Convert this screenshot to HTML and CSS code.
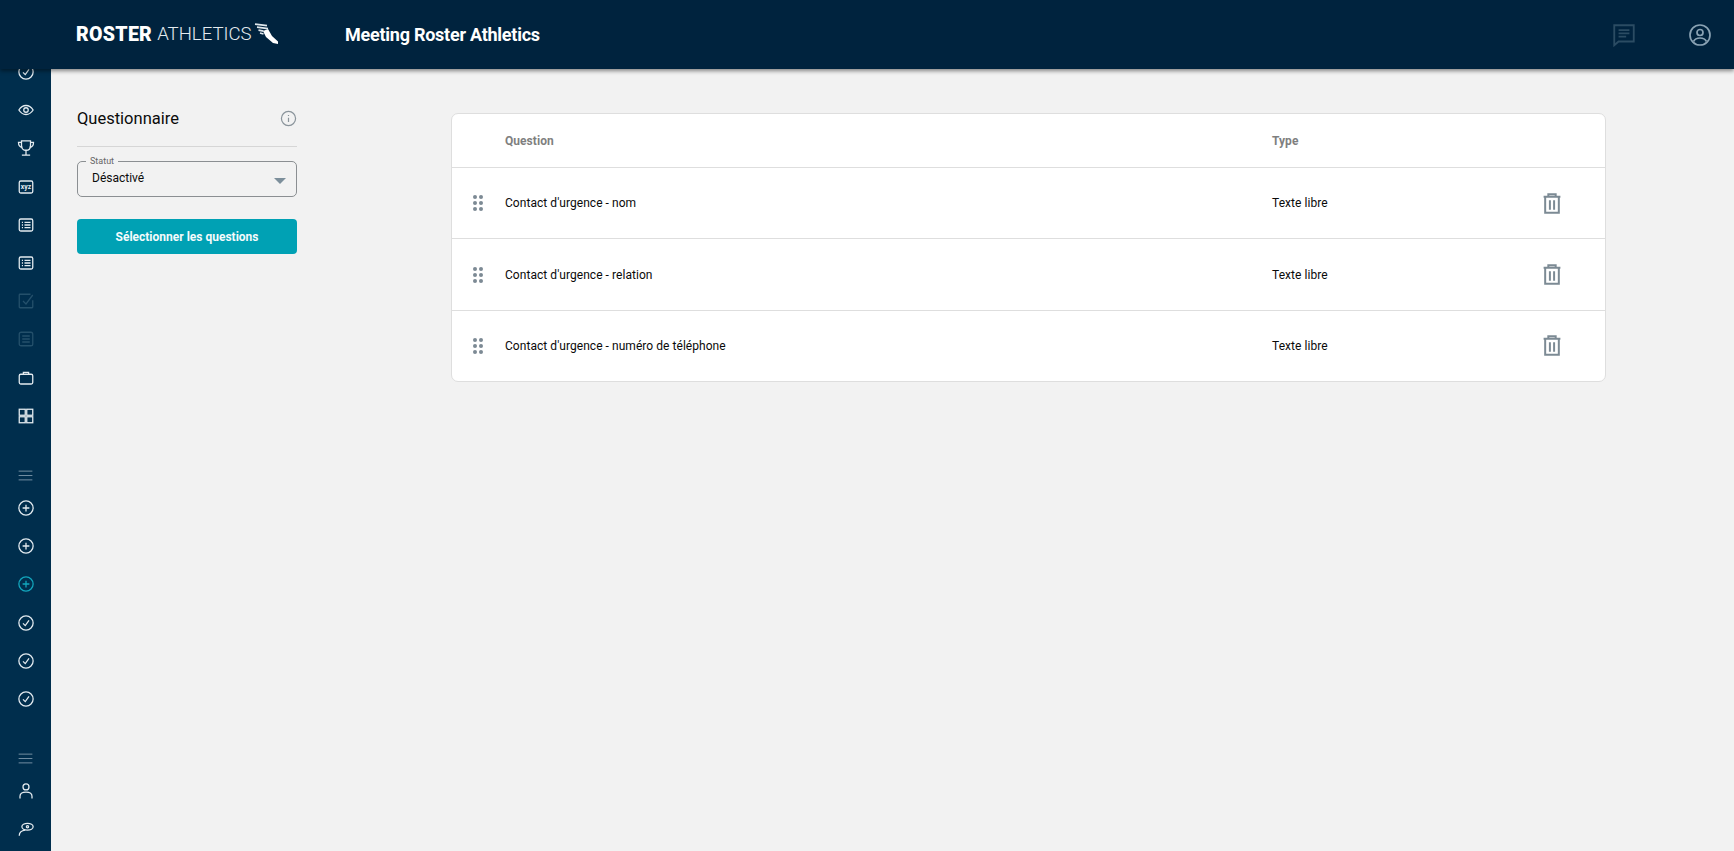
FILE: index.html
```html
<!DOCTYPE html>
<html lang="fr">
<head>
<meta charset="utf-8">
<title>Meeting Roster Athletics</title>
<link rel="stylesheet" href="styles.css">
</head>
<body>
<svg class="defs" width="0" height="0">
  <symbol id="i-check" viewBox="0 0 24 24"><circle cx="12" cy="12" r="9.5"/><path d="M8 12.5l3 3 5-7"/></symbol>
  <symbol id="i-plus" viewBox="0 0 24 24"><circle cx="12" cy="12" r="9.5"/><path d="M12 7.5v9M7.5 12h9"/></symbol>
  <symbol id="i-list" viewBox="0 0 24 24"><rect x="3" y="4" width="18" height="16" rx="2"/><path d="M6.5 8.5h1.5M6.5 12h1.5M6.5 15.5h1.5M10 8.500h8M10 12h8M10 15.500h8"/></symbol>
  <symbol id="i-menu" viewBox="0 0 24 24"><path d="M1 5h22M1 12h22M1 19h22"/></symbol>
</svg>

<header class="topbar">
  <div class="logo">
    <span class="logo-strong">ROSTER</span><span class="logo-light">ATHLETICS</span>
    <svg class="logo-wing" viewBox="0 0 24 22" width="24" height="22"><path class="wing-foot" d="M9 8l5-2 4 7 6 5.500v2.500l-5-1-7-6z"/><path class="wing-feathers" d="M1 1.200l12 1.500M3 4.200l11 1.500M4.500 7.200l5 1M6 10l3.500 1"/></svg>
  </div>
  <h1 class="app-title">Meeting Roster Athletics</h1>
  <div class="top-actions">
    <svg class="top-icon chat" viewBox="0 0 24 24" width="26" height="26"><path d="M3 3h18v15H7l-4 3.500z"/><path d="M7 7.500h10M7 10.500h10M7 13.500h7"/></svg>
    <svg class="top-icon account" viewBox="0 0 24 24" width="24" height="24"><circle cx="12" cy="12" r="10"/><circle cx="12" cy="9.500" r="3"/><path d="M5.500 18.500c1.500-3 4-3.500 6.500-3.500s5 .5 6.500 3.500"/></svg>
  </div>
</header>

<div class="shell">
  <nav class="sidenav">
    <div class="nav-list">
      <a class="nav-item"><svg class="nav-icon"><use href="#i-check"/></svg></a>
      <a class="nav-item"><svg class="nav-icon" viewBox="0 0 24 24"><path d="M2.500 12c2.500-4 5.800-6 9.500-6s7 2 9.500 6c-2.500 4-5.800 6-9.500 6s-7-2-9.500-6z"/><circle cx="12" cy="12" r="3"/></svg></a>
      <a class="nav-item"><svg class="nav-icon" viewBox="0 0 24 24"><path d="M6 2.500h12v6c0 4-2.500 6.500-6 6.500S6 12.500 6 8.500z"/><path d="M6 4.500H2c0 3.500 1.500 6 5 6.500M18 4.500h4c0 3.500-1.500 6-5 6.500M12 15v6.500M6.500 21.500h11"/></svg></a>
      <a class="nav-item"><svg class="nav-icon" viewBox="0 0 24 24"><rect x="3" y="4" width="18" height="16" rx="2"/><text class="xyz" x="12" y="15" text-anchor="middle">xyz</text></svg></a>
      <a class="nav-item"><svg class="nav-icon"><use href="#i-list"/></svg></a>
      <a class="nav-item"><svg class="nav-icon"><use href="#i-list"/></svg></a>
      <a class="nav-item is-disabled"><svg class="nav-icon" viewBox="0 0 24 24"><path d="M21 11v9a1 1 0 0 1-1 1H4a1 1 0 0 1-1-1V4a1 1 0 0 1 1-1h14"/><path d="M8 12l4 4 9-12"/></svg></a>
      <a class="nav-item is-disabled"><svg class="nav-icon" viewBox="0 0 24 24"><rect x="3" y="3" width="18" height="18" rx="2.500"/><path d="M7 8h10M7 12h10M7 16h10"/></svg></a>
      <a class="nav-item"><svg class="nav-icon" viewBox="0 0 24 24"><rect x="3" y="7" width="18" height="13" rx="2"/><path d="M8.500 7V4.500h7V7"/></svg></a>
      <a class="nav-item"><svg class="nav-icon" viewBox="0 0 24 24"><rect x="3" y="3" width="8" height="8"/><rect x="13" y="3" width="8" height="8"/><rect x="3" y="13" width="8" height="8"/><rect x="13" y="13" width="8" height="8"/></svg></a>
    </div>
    <div class="nav-list nav-group">
      <a class="nav-menu"><svg class="nav-icon is-dim"><use href="#i-menu"/></svg></a>
      <a class="nav-item"><svg class="nav-icon"><use href="#i-plus"/></svg></a>
      <a class="nav-item"><svg class="nav-icon"><use href="#i-plus"/></svg></a>
      <a class="nav-item is-active"><svg class="nav-icon"><use href="#i-plus"/></svg></a>
      <a class="nav-item"><svg class="nav-icon"><use href="#i-check"/></svg></a>
      <a class="nav-item"><svg class="nav-icon"><use href="#i-check"/></svg></a>
      <a class="nav-item"><svg class="nav-icon"><use href="#i-check"/></svg></a>
    </div>
    <div class="nav-list nav-group">
      <a class="nav-menu"><svg class="nav-icon is-dim"><use href="#i-menu"/></svg></a>
      <a class="nav-item"><svg class="nav-icon" viewBox="0 0 24 24"><circle cx="12" cy="6.500" r="4"/><path d="M4 22v-3c0-3.500 3-5.500 8-5.500s8 2 8 5.500v3"/></svg></a>
      <a class="nav-item"><svg class="nav-icon" viewBox="0 0 24 24"><ellipse cx="14" cy="9" rx="7.500" ry="4.500"/><circle cx="14" cy="9" r="1.500"/><path d="M3 21c0-4 3-7 8-7.500"/></svg></a>
    </div>
  </nav>

  <main class="content">
    <aside class="panel">
      <div class="panel-head">
        <h2 class="panel-title">Questionnaire</h2>
        <svg class="info-icon" viewBox="0 0 24 24" width="17" height="17"><circle cx="12" cy="12" r="10"/><path d="M12 11v6M12 7v1.500"/></svg>
      </div>
      <fieldset class="select-field">
        <legend class="select-legend">Statut</legend>
        <span class="select-value">Désactivé</span>
        <span class="select-arrow"></span>
      </fieldset>
      <button class="primary-btn" type="button">Sélectionner les questions</button>
    </aside>

    <section class="card">
      <div class="row row-head">
        <span></span>
        <span>Question</span>
        <span>Type</span>
        <span></span>
      </div>
      <div class="row">
        <svg class="drag" viewBox="0 0 12 18" width="12" height="18"><circle cx="3" cy="3" r="2"/><circle cx="9" cy="3" r="2"/><circle cx="3" cy="9" r="2"/><circle cx="9" cy="9" r="2"/><circle cx="3" cy="15" r="2"/><circle cx="9" cy="15" r="2"/></svg>
        <span>Contact d'urgence - nom</span>
        <span>Texte libre</span>
        <svg class="trash" viewBox="0 0 18 20" width="20" height="21"><path d="M1 3.500h16M5.500 3V1.200h7V3M2.500 4v14.800h13V4M7 7v9M11 7v9"/></svg>
      </div>
      <div class="row">
        <svg class="drag" viewBox="0 0 12 18" width="12" height="18"><circle cx="3" cy="3" r="2"/><circle cx="9" cy="3" r="2"/><circle cx="3" cy="9" r="2"/><circle cx="9" cy="9" r="2"/><circle cx="3" cy="15" r="2"/><circle cx="9" cy="15" r="2"/></svg>
        <span>Contact d'urgence - relation</span>
        <span>Texte libre</span>
        <svg class="trash" viewBox="0 0 18 20" width="20" height="21"><path d="M1 3.500h16M5.500 3V1.200h7V3M2.500 4v14.800h13V4M7 7v9M11 7v9"/></svg>
      </div>
      <div class="row">
        <svg class="drag" viewBox="0 0 12 18" width="12" height="18"><circle cx="3" cy="3" r="2"/><circle cx="9" cy="3" r="2"/><circle cx="3" cy="9" r="2"/><circle cx="9" cy="9" r="2"/><circle cx="3" cy="15" r="2"/><circle cx="9" cy="15" r="2"/></svg>
        <span>Contact d'urgence - numéro de téléphone</span>
        <span>Texte libre</span>
        <svg class="trash" viewBox="0 0 18 20" width="20" height="21"><path d="M1 3.500h16M5.500 3V1.200h7V3M2.500 4v14.800h13V4M7 7v9M11 7v9"/></svg>
      </div>
    </section>
  </main>
</div>
</body>
</html>
```

FILE: styles.css
```css
* { box-sizing: border-box; }

html, body {
  height: 100%;
  margin: 0;
  overflow: hidden;
}

body {
  display: flex;
  flex-direction: column;
  background: #f2f2f2;
  color: #000;
  font-family: Roboto, "Liberation Sans", sans-serif;
  font-size: 13px;
}

.defs { position: absolute; }

/* Top bar */
.topbar {
  position: relative;
  z-index: 2;
  flex: 0 0 69px;
  display: flex;
  align-items: center;
  padding-left: 76px;
  background: #00233e;
  box-shadow: 0 2px 4px rgba(0, 0, 0, .45);
}

.logo {
  display: flex;
  align-items: center;
  width: 269px;
  color: #fff;
  font-size: 19.500px;
  line-height: 1;
}

.logo-strong { font-weight: 900; letter-spacing: .3px; }
.logo-light { margin-left: 5px; font-size: 18.600px; font-weight: 300; color: #e4ebf0; }
.logo-wing { margin: -1px 0 0 2px; fill: none; flex: none; }
.wing-foot { fill: #fff; }
.wing-feathers { stroke: #dfe7ec; stroke-width: 1.700; }

.app-title {
  margin: 0;
  color: #fff;
  font-size: 18px;
  font-weight: 700;
  letter-spacing: -.25px;
}

.top-actions {
  display: flex;
  align-items: center;
  gap: 51px;
  margin-left: auto;
  padding-right: 22px;
}

.top-icon { fill: none; stroke-width: 1.700; }
.chat { stroke: #2b4c63; }
.account { stroke: #8aa3b4; }

/* Sidebar */
.shell {
  flex: 1;
  display: flex;
  min-height: 0;
}

.sidenav {
  flex: 0 0 51px;
  background: #002e4d;
  overflow: hidden;
}

.nav-list:first-child { margin-top: -16px; }
.nav-group { margin-top: 25px; }
.nav-group:last-child { margin-top: 24.500px; }

.nav-item,
.nav-menu {
  display: flex;
  align-items: center;
  justify-content: center;
  height: 38.200px;
}

.nav-menu { height: 38px; margin-bottom: -9px; padding-bottom: 6px; }

.nav-icon {
  width: 15px;
  height: 15px;
  fill: none;
  stroke: #e3ebf0;
  stroke-width: 1.700;
  overflow: visible;
}

.nav-item .nav-icon { width: 18px; height: 18px; }
.xyz {
  fill: #e3ebf0;
  stroke: none;
  font: 700 9px Roboto, "Liberation Sans", sans-serif;
}
.is-dim { stroke: #8aa3b4; stroke-width: 1.300; }
.is-disabled .nav-icon { stroke: #24506b; }
.is-active .nav-icon { stroke: #12a6bd; }

/* Content */
.content {
  flex: 1;
  display: flex;
  align-items: flex-start;
  min-width: 0;
  padding: 44px 128px 0 26px;
}

.panel {
  flex: 0 0 220px;
  margin-right: 154px;
}

.panel-head {
  display: flex;
  align-items: center;
  justify-content: space-between;
  height: 42px;
  margin-top: -8px;
  padding-bottom: 15px;
  border-bottom: 1px solid #d6d6d6;
}

.panel-title {
  margin: 0;
  font-size: 16.500px;
  font-weight: 400;
  color: #0b0b0b;
}

.info-icon { fill: none; stroke: #8a949b; stroke-width: 1.700; }

.select-field {
  position: relative;
  height: 41px;
  margin: 9px 0 0;
  padding: 0 13px;
  border: 1px solid #8b8f92;
  border-radius: 5px;
}

.select-legend {
  padding: 0 4px;
  margin-left: -5px;
  font-size: 9px;
  line-height: 11px;
  color: #666;
}

.select-value {
  display: block;
  margin-top: 3px;
  margin-left: 1px;
  line-height: 16px;
  font-size: 12px;
  color: #0c0c0c;
}

.select-arrow {
  position: absolute;
  top: 11px;
  right: 10px;
  width: 0;
  height: 0;
  border-left: 6px solid transparent;
  border-right: 6px solid transparent;
  border-top: 6px solid #7d8f9b;
}

.primary-btn {
  display: block;
  width: 100%;
  height: 35px;
  margin-top: 22px;
  border: 0;
  border-radius: 4px;
  background: #00a1b4;
  color: #f4fbfc;
  font: 700 12px Roboto, "Liberation Sans", sans-serif;
}

.card {
  flex: 1;
  min-width: 0;
  background: #fff;
  border: 1px solid #dedede;
  border-radius: 7px;
  overflow: hidden;
}

.row {
  display: grid;
  grid-template-columns: 53px 767px 250px 60px;
  align-items: center;
  height: 71.400px;
  font-size: 12px;
  letter-spacing: .05px;
  color: #0a0a0a;
  border-top: 1px solid #dedede;
}

.row-head {
  height: 53px;
  border-top: 0;
  color: #7f7f7f;
  font-weight: 700;
  font-size: 12px;
}

.drag { justify-self: end; margin-right: 21px; fill: #7c8a94; }
.trash { justify-self: center; fill: none; stroke: #7c8a94; stroke-width: 1.900; }
```
